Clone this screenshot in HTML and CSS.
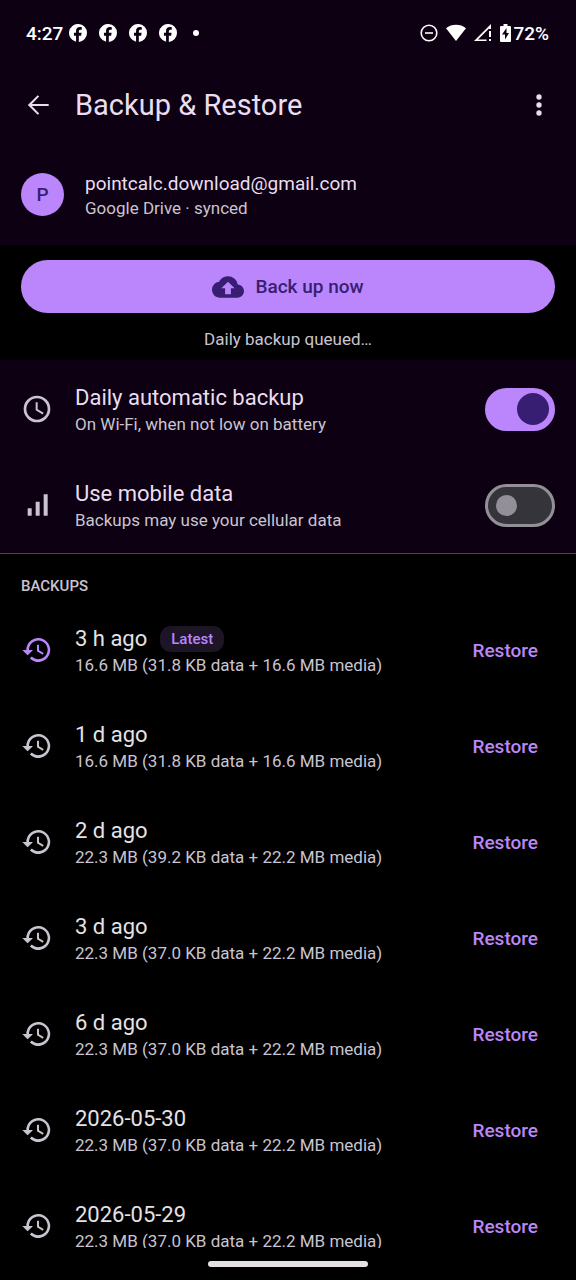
FILE: index.html
```html
<!DOCTYPE html>
<html lang="en">
<head>
<meta charset="utf-8">
<meta name="viewport" content="width=device-width, initial-scale=1">
<title>Backup &amp; Restore</title>
<link rel="stylesheet" href="styles.css">
</head>
<body>
<svg class="defs" aria-hidden="true">
  <symbol id="social" viewBox="0 0 24 24"><path fill-rule="evenodd" d="M24 12a12 12 0 1 0-14.6 11.7v-8.2H6.6V11.8h2.8V9.5c0-3.6 1.8-5.4 5.3-5.4.7 0 1.8.1 2.3.2v3.4h-1.5c-1.7 0-2.4.7-2.4 2.4v1.7h3.7l-.6 3.7h-3.1V24A12 12 0 0 0 24 12z"/></symbol>
  <symbol id="history" viewBox="0 0 24 24"><path d="M13 3a9 9 0 0 0-9 9H1l3.9 3.9.1.1L9 12H6a7 7 0 1 1 2.1 4.9l-1.5 1.5A9 9 0 1 0 13 3zm-1 5v5l4.3 2.5.7-1.2-3.5-2.1V8z"/></symbol>
</svg>
<div class="screen">
  <div class="status">
    <span class="time">4:27</span>
    <svg class="note"><use href="#social"/></svg>
    <svg class="note"><use href="#social"/></svg>
    <svg class="note"><use href="#social"/></svg>
    <svg class="note"><use href="#social"/></svg>
    <span class="more-dot"></span>
    <div class="system">
      <svg width="18" height="18" viewBox="0 0 18 18" fill="none" stroke="currentColor" stroke-width="1.6"><circle cx="9" cy="9" r="7.8"/><path d="M5 9h8"/></svg>
      <svg width="20" height="18" viewBox="0 0 20 18"><path d="M0 4.2C5.5-.3 14.500-.3 20 4.200L10 17z"/></svg>
      <svg width="18" height="18" viewBox="0 0 18 18"><path fill-rule="evenodd" d="M17 0v5h-2V4.500L4 15.500H12.500V17H0zM15 7h2v6h-2zM15 15h2v2h-2z"/></svg>
      <span class="battery"><svg width="11" height="18" viewBox="0 0 11 18"><path fill-rule="evenodd" d="M3.500 0h4v2H10q1 0 1 1v14q0 1-1 1H1q-1 0-1-1V3q0-1 1-1h2.500zM6.500 4L2 10.500h3V15.500L9 9H6.500z"/></svg>72%</span>
    </div>
  </div>

  <header class="appbar">
    <button class="icon-btn" type="button" aria-label="Back"><svg width="32" height="32" viewBox="0 0 24 24"><path d="M20 11.200H7.400l5.500-5.500L11.800 4.600l-7.400 7.400 7.400 7.400 1.100-1.100-5.500-5.500H20z"/></svg></button>
    <h1>Backup &amp; Restore</h1>
    <button class="icon-btn" type="button" aria-label="More options"><svg width="32" height="32" viewBox="0 0 24 24"><circle cx="12" cy="6" r="2"/><circle cx="12" cy="12" r="2"/><circle cx="12" cy="18" r="2"/></svg></button>
  </header>

  <section class="account">
    <div class="avatar">P</div>
    <div>
      <div class="email">pointcalc.download@gmail.com</div>
      <div class="sub">Google Drive · synced</div>
    </div>
  </section>

  <section class="backup">
    <button class="primary" type="button">
      <svg width="32" height="32" viewBox="0 0 24 24"><path d="M19.350 10.040A7.490 7.490 0 0 0 12 4C9.110 4 6.600 5.640 5.350 8.040A5.994 5.994 0 0 0 0 14c0 3.310 2.690 6 6 6h13c2.760 0 5-2.240 5-5 0-2.640-2.050-4.780-4.650-4.960zM14.200 13v4.500H9.800V13H7l5-5 5 5h-2.800z" fill-rule="evenodd"/></svg>
      Back up now
    </button>
    <p>Daily backup queued…</p>
  </section>

  <section class="settings">
    <div class="row">
      <svg class="lead" viewBox="0 0 24 24"><path d="M12 2a10 10 0 1 0 0 20 10 10 0 0 0 0-20zm0 18a8 8 0 1 1 0-16 8 8 0 0 1 0 16zM12.500 7H11v6l5.200 3.200.8-1.300-4.500-2.700z"/></svg>
      <label class="text" for="daily"><span class="title">Daily automatic backup</span><span class="sub">On Wi-Fi, when not low on battery</span></label>
      <input class="switch" id="daily" type="checkbox" role="switch" checked>
    </div>
    <div class="row">
      <svg class="lead" viewBox="0 0 24 24"><path d="M5 14.500h3V20H5zM11 9.500h3V20h-3zM17 4h3v16h-3z"/></svg>
      <label class="text" for="mobile"><span class="title">Use mobile data</span><span class="sub">Backups may use your cellular data</span></label>
      <input class="switch" id="mobile" type="checkbox" role="switch">
    </div>
  </section>

  <main class="list">
    <h2>BACKUPS</h2>
    <div class="row latest">
      <svg class="lead"><use href="#history"/></svg>
      <div class="text"><span class="title">3 h ago <span class="badge">Latest</span></span><span class="sub">16.6 MB (31.8 KB data + 16.6 MB media)</span></div>
      <button class="restore" type="button">Restore</button>
    </div>
    <div class="row">
      <svg class="lead"><use href="#history"/></svg>
      <div class="text"><span class="title">1 d ago</span><span class="sub">16.6 MB (31.8 KB data + 16.6 MB media)</span></div>
      <button class="restore" type="button">Restore</button>
    </div>
    <div class="row">
      <svg class="lead"><use href="#history"/></svg>
      <div class="text"><span class="title">2 d ago</span><span class="sub">22.3 MB (39.2 KB data + 22.2 MB media)</span></div>
      <button class="restore" type="button">Restore</button>
    </div>
    <div class="row">
      <svg class="lead"><use href="#history"/></svg>
      <div class="text"><span class="title">3 d ago</span><span class="sub">22.3 MB (37.0 KB data + 22.2 MB media)</span></div>
      <button class="restore" type="button">Restore</button>
    </div>
    <div class="row">
      <svg class="lead"><use href="#history"/></svg>
      <div class="text"><span class="title">6 d ago</span><span class="sub">22.3 MB (37.0 KB data + 22.2 MB media)</span></div>
      <button class="restore" type="button">Restore</button>
    </div>
    <div class="row">
      <svg class="lead"><use href="#history"/></svg>
      <div class="text"><span class="title">2026-05-30</span><span class="sub">22.3 MB (37.0 KB data + 22.2 MB media)</span></div>
      <button class="restore" type="button">Restore</button>
    </div>
    <div class="row">
      <svg class="lead"><use href="#history"/></svg>
      <div class="text"><span class="title">2026-05-29</span><span class="sub">22.3 MB (37.0 KB data + 22.2 MB media)</span></div>
      <button class="restore" type="button">Restore</button>
    </div>
  </main>

  <div class="navbar"><span class="handle"></span></div>
</div>
</body>
</html>
```
FILE: styles.css
```css
* { box-sizing: border-box; }

:root {
  --surface: #0d0012;
  --accent: #bb86fc;
  --on-accent: #381e72;
  --text: #e9def0;
  --muted: #cac4d0;
}

body {
  margin: 0;
  background: #000;
  color: var(--text);
  font-family: Roboto, "Liberation Sans", sans-serif;
}

svg { display: block; fill: currentColor; flex: none; }
svg[fill="none"] { fill: none; }
.defs { position: absolute; width: 0; height: 0; }
h1, h2, p { margin: 0; font-weight: 400; }
button { border: 0; padding: 0; background: none; color: inherit; font: inherit; cursor: pointer; }

.screen { display: flex; flex-direction: column; height: 100vh; overflow: hidden; }

.status {
  display: flex;
  flex: none;
  align-items: center;
  gap: 12px;
  height: 66px;
  padding: 0 27px 0 26px;
  background: var(--surface);
  color: #fff;
  font-size: 19px;
  font-weight: 500;
}
.time { margin-right: -6px; }
.note { width: 18px; height: 18px; }
.more-dot { width: 6px; height: 6px; margin-left: 4px; border-radius: 50%; background: #fff; }
.system { display: flex; align-items: center; gap: 8px; margin-left: auto; }
.battery { display: flex; align-items: center; gap: 2px; }

.appbar {
  display: flex;
  flex: none;
  align-items: center;
  gap: 16px;
  height: 78px;
  padding: 0 16px;
  background: var(--surface);
}
.appbar h1 { flex: 1; font-size: 29px; line-height: 36px; }
.icon-btn { display: grid; place-items: center; width: 43px; height: 48px; }

.account {
  display: flex;
  flex: none;
  align-items: center;
  gap: 21px;
  height: 101px;
  padding: 0 21px;
  background: var(--surface);
}
.avatar {
  display: grid;
  place-items: center;
  width: 43px;
  height: 43px;
  border-radius: 50%;
  background: var(--accent);
  color: var(--on-accent);
  font-size: 19px;
  font-weight: 500;
}
.email { font-size: 19px; line-height: 26px; }
.sub { color: var(--muted); font-size: 17px; line-height: 22px; }

.backup { flex: none; padding: 15px 21px 10px; }
.primary {
  display: flex;
  align-items: center;
  justify-content: center;
  gap: 11px;
  width: 100%;
  height: 53px;
  border-radius: 27px;
  background: var(--accent);
  color: var(--on-accent);
  font-size: 19px;
  font-weight: 500;
}
.backup p { padding-top: 15px; color: var(--muted); font-size: 17px; line-height: 22px; text-align: center; }

.settings { flex: none; background: var(--surface); border-bottom: 1px solid #49454f; }
.settings .row:first-child { padding-top: 1px; height: 97px; }
.row { display: flex; align-items: center; gap: 22px; height: 96px; padding: 0 21px; }
.lead { width: 32px; height: 32px; color: var(--muted); }
.text { display: flex; flex: 1; flex-direction: column; }
.title { display: flex; align-items: center; gap: 13px; font-size: 22px; line-height: 30px; }

.switch {
  appearance: none;
  display: flex;
  align-items: center;
  width: 70px;
  height: 43px;
  margin: 0;
  padding: 0 8px;
  border: 3px solid #938f99;
  border-radius: 22px;
  background: #36343b;
}
.switch::before { content: ""; width: 21px; height: 21px; border-radius: 50%; background: #938f99; }
.switch:checked { justify-content: flex-end; padding: 0 3px; border-color: var(--accent); background: var(--accent); }
.switch:checked::before { width: 32px; height: 32px; background: var(--on-accent); }

.list { flex: 1; min-height: 0; overflow: hidden; color: #e6e1e5; }
.list h2 { padding: 21px 21px 5px; color: var(--muted); font-size: 15px; font-weight: 500; line-height: 22px; }
.latest .lead { color: var(--accent); }
.badge {
  padding: 0 11px;
  border-radius: 11px;
  background: #1d1426;
  color: var(--accent);
  font-size: 15px;
  font-weight: 500;
  line-height: 26px;
}
.restore { height: 53px; padding: 0 17px; color: var(--accent); font-size: 19px; font-weight: 500; }

.navbar { display: grid; flex: none; place-items: center; height: 32px; }
.handle { width: 160px; height: 6px; border-radius: 3px; background: #e6e1e5; }
```
